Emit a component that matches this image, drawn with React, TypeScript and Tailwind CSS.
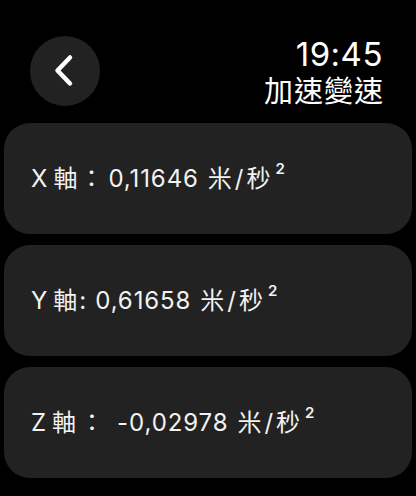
type Reading = {
  axis: string
  sep: string
  sepClass: string
  value: string
}

const readings: Reading[] = [
  { axis: 'X', sep: '：', sepClass: 'ml-[2px] mr-[5px]', value: '0,11646' },
  { axis: 'Y', sep: ':', sepClass: 'ml-[2px] mr-[9px]', value: '0,61658' },
  { axis: 'Z', sep: '：', sepClass: 'ml-[4px] mr-[13px]', value: '-0,02978' },
]

function ReadingCard({ reading }: { reading: Reading }) {
  return (
    <div className="flex h-[111px] items-center rounded-[26px] bg-[#222222] pl-[27px]">
      <div className="flex items-baseline text-[24px] leading-none text-[#f2f2f2]">
        <span>{reading.axis}</span>
        <span className="ml-[6px]">軸</span>
        <span className={reading.sepClass}>{reading.sep}</span>
        <span className="tracking-[0.9px]">{reading.value}</span>
        <span className="ml-[9px]">米</span>
        <span className="mx-[3px]">/</span>
        <span>秒</span>
        <span className="ml-[5px] -mt-[6px] self-start text-[15px] font-semibold">2</span>
      </div>
    </div>
  )
}

export default function App() {
  return (
    <div
      className="h-[496px] w-[416px] overflow-hidden bg-black text-white"
      style={{ fontFamily: 'Inter, "Noto Sans CJK TC", sans-serif' }}
    >
      <div className="flex items-start justify-between pr-[33px] pl-[30px] pt-[36px]">
        <button className="flex h-[70px] w-[70px] items-center justify-center rounded-full bg-[#222222]">
          <svg width="70" height="70" viewBox="0 0 70 70" fill="none">
            <polyline
              points="40,21.5 27.5,34.5 40,47.5"
              stroke="white"
              strokeWidth="4.5"
              strokeLinecap="round"
              strokeLinejoin="round"
            />
          </svg>
        </button>
        <div className="flex flex-col items-end">
          <div className="text-[33px] leading-[36px] font-normal tracking-[0.5px]">19:45</div>
          <div className="mt-[3px] -mr-[1px] text-[29px] leading-[34px] font-normal tracking-[1px]">加速變速</div>
        </div>
      </div>
      <div className="mt-[14px] flex flex-col gap-[11px] px-[4px]">
        {readings.map((r) => (
          <ReadingCard key={r.axis} reading={r} />
        ))}
      </div>
    </div>
  )
}
